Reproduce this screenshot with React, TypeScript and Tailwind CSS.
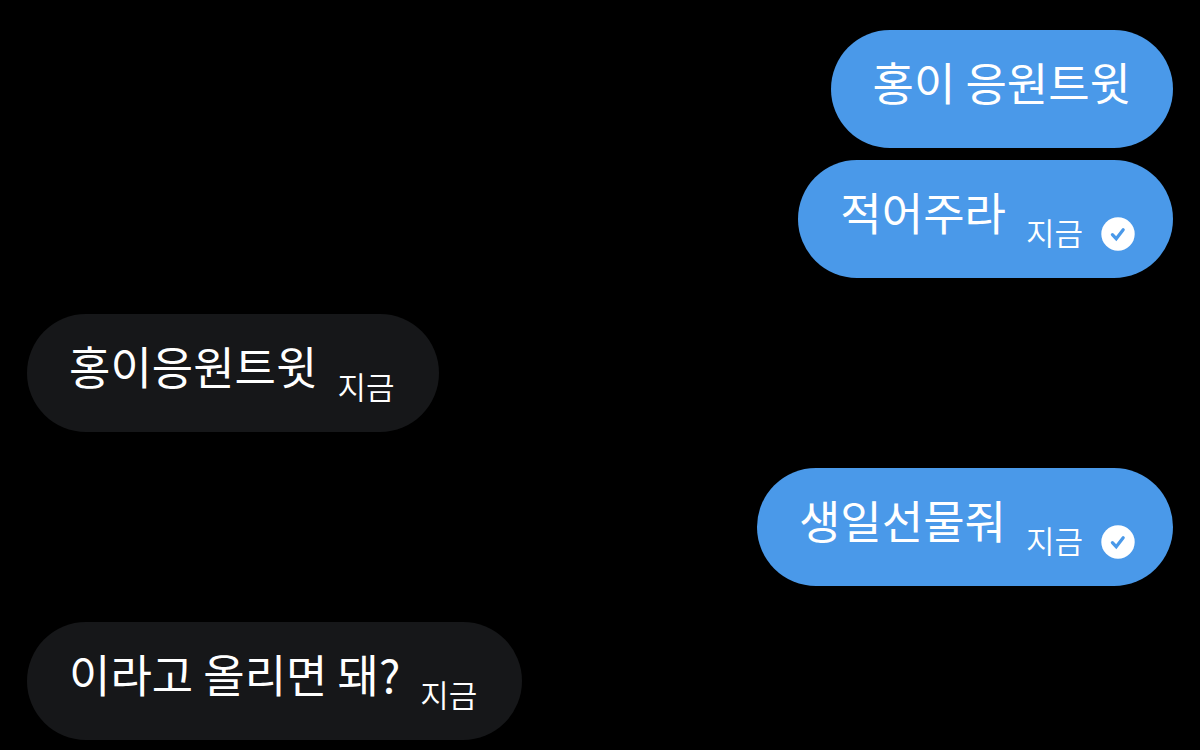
import clsx from 'clsx';

interface Message {
    id: number;
    text: string;
    sent: boolean;
    time?: string;
    gap: string;
}

const messages: Message[] = [
    { id: 1, text: '홍이 응원트윗', sent: true, gap: 'mt-0' },
    { id: 2, text: '적어주라', sent: true, time: '지금', gap: 'mt-3' },
    { id: 3, text: '홍이응원트윗', sent: false, time: '지금', gap: 'mt-9' },
    { id: 4, text: '생일선물줘', sent: true, time: '지금', gap: 'mt-9' },
    { id: 5, text: '이라고 올리면 돼?', sent: false, time: '지금', gap: 'mt-9' },
];

function SentIcon() {
    return (
        <svg viewBox="0 0 34 34" className="mt-1 ml-[18px] size-[34px]" role="img" aria-label="전송됨">
            <circle cx="17" cy="17" r="16.7" fill="#fff" />
            <path
                d="M11.4 17.7l3.8 4 7-9"
                fill="none"
                stroke="#4a99e9"
                strokeWidth="3.2"
                strokeLinecap="round"
            />
        </svg>
    );
}

function Bubble({ message }: { message: Message }) {
    const { text, sent, time, gap } = message;

    return (
        <li
            className={clsx(
                'flex h-[118px] items-start rounded-full pt-[22px] pl-[42px] text-white',
                gap,
                sent ? 'self-end bg-[#4a99e9]' : 'self-start bg-[#161719]',
                !time && 'pr-[42px]',
                time && (sent ? 'pr-[38px]' : 'pr-[45px]'),
            )}
        >
            <p className="text-[45px] leading-[60px]">{text}</p>
            {time && (
                <div className="mt-[30px] ml-5 flex items-center">
                    <time className="text-[31px] leading-10 font-[350]">{time}</time>
                    {sent && <SentIcon />}
                </div>
            )}
        </li>
    );
}

export default function App() {
    return (
        <main className="min-h-screen bg-black px-[27px] pt-[30px] font-['Noto_Sans_CJK_KR',sans-serif]">
            <ul className="flex flex-col">
                {messages.map(message => (
                    <Bubble key={message.id} message={message} />
                ))}
            </ul>
        </main>
    );
}
